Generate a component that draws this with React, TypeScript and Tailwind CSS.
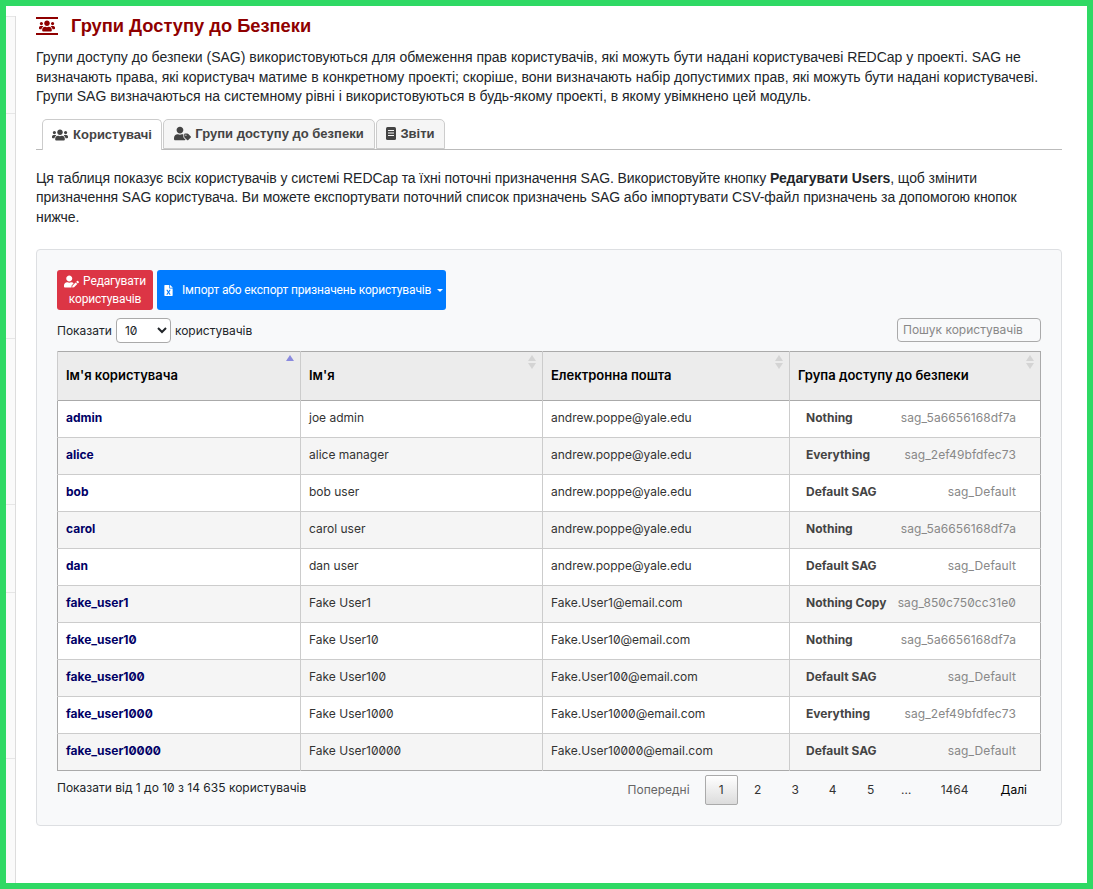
import { FaFileExcel, FaUsers, FaUserEdit, FaUserTag } from "react-icons/fa";

const ROWS = [
  ["admin", "joe admin", "andrew.poppe@yale.edu", "Nothing", "sag_5a6656168df7a"],
  ["alice", "alice manager", "andrew.poppe@yale.edu", "Everything", "sag_2ef49bfdfec73"],
  ["bob", "bob user", "andrew.poppe@yale.edu", "Default SAG", "sag_Default"],
  ["carol", "carol user", "andrew.poppe@yale.edu", "Nothing", "sag_5a6656168df7a"],
  ["dan", "dan user", "andrew.poppe@yale.edu", "Default SAG", "sag_Default"],
  ["fake_user1", "Fake User1", "Fake.User1@email.com", "Nothing Copy", "sag_850c750cc31e0"],
  ["fake_user10", "Fake User10", "Fake.User10@email.com", "Nothing", "sag_5a6656168df7a"],
  ["fake_user100", "Fake User100", "Fake.User100@email.com", "Default SAG", "sag_Default"],
  ["fake_user1000", "Fake User1000", "Fake.User1000@email.com", "Everything", "sag_2ef49bfdfec73"],
  ["fake_user10000", "Fake User10000", "Fake.User10000@email.com", "Default SAG", "sag_Default"],
];

const COLUMNS = [
  { label: "Ім'я користувача", width: "w-[243px]", sorted: true },
  { label: "Ім'я", width: "w-[242px]", sorted: false },
  { label: "Електронна пошта", width: "w-[247px]", sorted: false },
  { label: "Група доступу до безпеки", width: "w-[251px]", sorted: false },
];

function SortArrows({ sorted }: { sorted: boolean }) {
  return (
    <svg width="10" height="16" viewBox="0 0 10 16" className="absolute right-[5px] top-[2px]">
      <path d="M5 1 9 7H1Z" fill={sorted ? "#8a8ade" : "#d4d4d4"} />
      {!sorted && <path d="M5 15 9 9H1Z" fill="#d4d4d4" />}
    </svg>
  );
}

function ReportIcon() {
  return (
    <svg width="10" height="13" viewBox="0 0 10 13">
      <rect width="10" height="13" rx="1.5" fill="#444444" />
      <path d="M2 3.5h6M2 6h6M2 8.5h6" stroke="#f5f5f5" strokeWidth="1" />
    </svg>
  );
}

export default function App() {
  return (
    <div className="h-[889px] w-[1093px] overflow-hidden border-[6px] border-[#2fd964] bg-white font-['Inter',sans-serif] text-[#212529]">
      <div className="flex h-full">
        {/* left menu strip */}
        <div className="mt-[10px] flex w-[10px] shrink-0 flex-col border-r border-[#dddddd] bg-[#fafafa]">
          <div className="h-[97px] border-t border-[#e6e6e6]" />
          <div className="h-[225px] border-t border-[#e6e6e6]" />
          <div className="h-[166px] border-t border-[#e6e6e6]" />
          <div className="h-[88px] border-t border-[#e6e6e6]" />
          <div className="h-[166px] border-t border-[#e6e6e6]" />
          <div className="flex-1 border-t border-[#e6e6e6]" />
        </div>
        <div className="w-[1046px] pl-[20px]">
          <h1 className="mt-[7px] flex h-[26px] items-center font-['Liberation_Sans',sans-serif] text-[18.3px] font-bold text-[#8f0000]">
            <span className="mr-[13px] flex h-[18px] w-[22px] flex-col items-center justify-center border-y-2 border-[#8f0000] text-[16px]">
              <FaUsers />
            </span>
            Групи Доступу до Безпеки
          </h1>
          <p className="mt-[9px] font-['Liberation_Sans',sans-serif] text-[14px] leading-[19.5px]">
            Групи доступу до безпеки (SAG) використовуються для обмеження прав користувачів, які можуть бути надані користувачеві REDCap у проекті. SAG не визначають права, які користувач матиме в конкретному проекті; скоріше, вони визначають набір допустимих прав, які можуть бути надані користувачеві. Групи SAG визначаються на системному рівні і використовуються в будь-якому проекті, в якому увімкнено цей модуль.
          </p>
          <div className="mt-[12px] flex h-[31px] gap-[1px] border-b border-[#bbbbbb] pl-[6px] font-['Liberation_Sans',sans-serif] text-[13px] font-bold text-[#444444]">
            <div className="flex h-[31px] w-[120px] items-center justify-center gap-[5px] rounded-t-[5px] border border-b-0 border-[#cccccc] bg-white">
              <FaUsers className="text-[16px]" /> Користувачі
            </div>
            <div className="flex h-[30px] w-[212px] items-center justify-center gap-[4px] rounded-t-[5px] border border-[#cccccc] bg-[#f5f5f5]">
              <FaUserTag className="text-[17px]" /> Групи доступу до безпеки
            </div>
            <div className="flex h-[30px] w-[69px] items-center justify-center gap-[4px] rounded-t-[5px] border border-[#cccccc] bg-[#f5f5f5]">
              <ReportIcon /> Звіти
            </div>
          </div>
          <p className="mt-[19px] font-['Liberation_Sans',sans-serif] text-[14px] leading-[19.5px] tracking-[-0.08px]">
            Ця таблиця показує всіх користувачів у системі REDCap та їхні поточні призначення SAG. Використовуйте кнопку <b>Редагувати Users</b>, щоб змінити призначення SAG користувача. Ви можете експортувати поточний список призначень SAG або імпортувати CSV-файл призначень за допомогою кнопок нижче.
          </p>
          <div className="mt-[22px] h-[577px] rounded-[4px] border border-[#dddfe2] bg-[#f8f9fa] px-[20px] pt-[20px]">
            <div className="flex gap-[4px] font-['Roboto',sans-serif] text-[12px] tracking-[-0.15px] text-white">
              <div className="flex h-[40px] w-[96px] flex-col items-center justify-center rounded-[3px] bg-[#dc3545] leading-[18px]">
                <span className="flex items-center gap-[4px]"><FaUserEdit className="text-[15px]" /> Редагувати</span>
                <span>користувачів</span>
              </div>
              <div className="flex h-[40px] w-[289px] items-center whitespace-nowrap rounded-[3px] bg-[#007bff] pl-[6px]">
                <FaFileExcel className="mr-[8px] shrink-0 text-[11px]" />
                Імпорт або експорт призначень користувачів
                <span className="ml-[6px] h-0 w-0 border-x-[3.5px] border-t-[3.5px] border-x-transparent border-t-white" />
              </div>
            </div>
            <div className="mt-[8px] flex h-[25px] items-center justify-between text-[12px] [font-feature-settings:'zero']">
              <div className="flex items-center gap-[4px]">
                Показати
                <select defaultValue="10" className="h-[25px] w-[55px] rounded-[4px] border border-[#aaaaaa] bg-white pl-[4px] text-[12px]">
                  <option value="10">10</option>
                </select>
                користувачів
              </div>
              <div className="mt-[-1px] flex h-[24px] w-[144px] items-center rounded-[4px] border border-[#aaaaaa] pl-[5px] text-[#888888]">
                Пошук користувачів
              </div>
            </div>
            <table className="mt-[8px] w-[983px] table-fixed border-collapse border border-[#aaaaaa] text-[12px] text-[#333333] [font-feature-settings:'zero']">
              <thead>
                <tr className="h-[49px] border-b border-[#aaaaaa] bg-[#ececec]">
                  {COLUMNS.map((col) => (
                    <th key={col.label} className={`${col.width} relative border-l border-[#cccccc] pl-[8px] text-left text-[13px] font-semibold text-black`}>
                      {col.label}
                      <SortArrows sorted={col.sorted} />
                    </th>
                  ))}
                </tr>
              </thead>
              <tbody>
                {ROWS.map((row, i) => (
                  <tr key={row[0]} className={`h-[37px] border-t border-[#cccccc] ${i % 2 ? "bg-[#f5f5f5]" : "bg-white"}`}>
                    <td className="pb-[2px] pl-[8px] font-bold text-[#000066]">{row[0]}</td>
                    <td className="border-l border-[#cccccc] pb-[2px] pl-[8px]">{row[1]}</td>
                    <td className="border-l border-[#cccccc] pb-[2px] pl-[8px]">{row[2]}</td>
                    <td className="border-l border-[#cccccc] pb-[2px] pl-[16px] pr-[24px]">
                      <div className="flex items-center justify-between whitespace-nowrap">
                        <span className="font-bold text-[#444444]">{row[3]}</span>
                        <span className="tracking-[0.1px] text-[#888888]">{row[4]}</span>
                      </div>
                    </td>
                  </tr>
                ))}
              </tbody>
            </table>
            <div className="mt-[4px] flex items-start justify-between text-[12px] [font-feature-settings:'zero']">
              <div className="mt-[4px]">Показати від 1 до 10 з 14 635 користувачів</div>
              <div className="flex h-[30px] items-center pr-[14px] text-[#333333]">
                <span className="mr-[15px] text-[#666666]">Попередні</span>
                <span className="flex h-[30px] w-[33px] items-center justify-center rounded-[2px] border border-[#aaaaaa] bg-gradient-to-b from-white to-[#dcdcdc]">1</span>
                <span className="w-[40px] text-center">2</span>
                <span className="w-[35px] text-center">3</span>
                <span className="w-[40px] text-center">4</span>
                <span className="w-[36px] text-center">5</span>
                <span className="w-[35px] text-center">…</span>
                <span className="w-[62px] text-center">1464</span>
                <span className="ml-[15px] text-black">Далі</span>
              </div>
            </div>
          </div>
        </div>
      </div>
    </div>
  );
}
